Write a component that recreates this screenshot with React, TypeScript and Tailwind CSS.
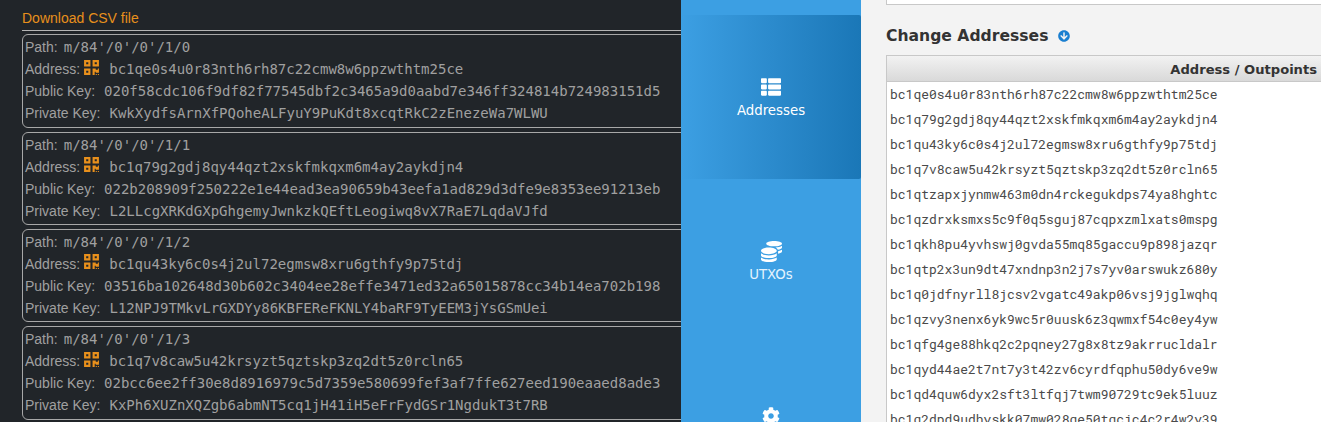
import React from "react";
import { FaThList, FaCoins, FaCog, FaArrowCircleDown, FaQrcode } from "react-icons/fa";

const keys = [
  {
    path: "m/84'/0'/0'/1/0",
    address: "bc1qe0s4u0r83nth6rh87c22cmw8w6ppzwthtm25ce",
    pub: "020f58cdc106f9df82f77545dbf2c3465a9d0aabd7e346ff324814b724983151d5",
    priv: "KwkXydfsArnXfPQoheALFyuY9PuKdt8xcqtRkC2zEnezeWa7WLWU",
  },
  {
    path: "m/84'/0'/0'/1/1",
    address: "bc1q79g2gdj8qy44qzt2xskfmkqxm6m4ay2aykdjn4",
    pub: "022b208909f250222e1e44ead3ea90659b43eefa1ad829d3dfe9e8353ee91213eb",
    priv: "L2LLcgXRKdGXpGhgemyJwnkzkQEftLeogiwq8vX7RaE7LqdaVJfd",
  },
  {
    path: "m/84'/0'/0'/1/2",
    address: "bc1qu43ky6c0s4j2ul72egmsw8xru6gthfy9p75tdj",
    pub: "03516ba102648d30b602c3404ee28effe3471ed32a65015878cc34b14ea702b198",
    priv: "L12NPJ9TMkvLrGXDYy86KBFEReFKNLY4baRF9TyEEM3jYsGSmUei",
  },
  {
    path: "m/84'/0'/0'/1/3",
    address: "bc1q7v8caw5u42krsyzt5qztskp3zq2dt5z0rcln65",
    pub: "02bcc6ee2ff30e8d8916979c5d7359e580699fef3af7ffe627eed190eaaed8ade3",
    priv: "KxPh6XUZnXQZgb6abmNT5cq1jH41iH5eFrFydGSr1NgdukT3t7RB",
  },
];

const change = [
  "bc1qe0s4u0r83nth6rh87c22cmw8w6ppzwthtm25ce",
  "bc1q79g2gdj8qy44qzt2xskfmkqxm6m4ay2aykdjn4",
  "bc1qu43ky6c0s4j2ul72egmsw8xru6gthfy9p75tdj",
  "bc1q7v8caw5u42krsyzt5qztskp3zq2dt5z0rcln65",
  "bc1qtzapxjynmw463m0dn4rckegukdps74ya8hghtc",
  "bc1qzdrxksmxs5c9f0q5sguj87cqpxzmlxats0mspg",
  "bc1qkh8pu4yvhswj0gvda55mq85gaccu9p898jazqr",
  "bc1qtp2x3un9dt47xndnp3n2j7s7yv0arswukz680y",
  "bc1q0jdfnyrll8jcsv2vgatc49akp06vsj9jglwqhq",
  "bc1qzvy3nenx6yk9wc5r0uusk6z3qwmxf54c0ey4yw",
  "bc1qfg4ge88hkq2c2pqney27g8x8tz9akrrucldalr",
  "bc1qyd44ae2t7nt7y3t42zv6cyrdfqphu50dy6ve9w",
  "bc1qd4quw6dyx2sft3ltfqj7twm90729tc9ek5luuz",
  "bc1q2dpd9udhyskk07mw028qe50tqcjc4c2r4w2y39",
];

const App: React.FC = () => {
  return (
    <div className="flex h-[422px] w-[1321px] overflow-hidden">
      {/* Left wallet dump */}
      <div className="w-[681px] shrink-0 overflow-hidden bg-[#212529] pl-[22px] font-['Liberation_Sans',sans-serif] text-[14px] text-[#a0a0a0]">
        <div className="pt-[10px] leading-[16px] text-[#e8901c]">Download CSV file</div>
        <div className="mt-[4px] w-[700px] border-t border-[#b5b5b5]"></div>
        <div className="mt-[3.3px] flex w-[700px] flex-col gap-[4px]">
          {keys.map((k) => (
            <div key={k.path} className="h-[93.33px] rounded-md border border-[#a8a8a8] pl-[2px] pt-[1px] leading-[22px]">
              <div className="flex h-[22px] items-center whitespace-nowrap">
                <span>Path:</span>
                <span className="ml-[6px] font-['DejaVu_Sans_Mono',monospace]">{k.path}</span>
              </div>
              <div className="flex h-[22px] items-center whitespace-nowrap">
                <span>Address:</span>
                <FaQrcode className="ml-[3px] mb-[4px] text-[17px] text-[#e8901c]" />
                <span className="ml-[9px] font-['DejaVu_Sans_Mono',monospace]">{k.address}</span>
              </div>
              <div className="flex h-[22px] items-center whitespace-nowrap">
                <span>Public Key:</span>
                <span className="ml-[9px] font-['DejaVu_Sans_Mono',monospace]">{k.pub}</span>
              </div>
              <div className="flex h-[22px] items-center whitespace-nowrap">
                <span>Private Key:</span>
                <span className="ml-[9px] font-['DejaVu_Sans_Mono',monospace]">{k.priv}</span>
              </div>
            </div>
          ))}
        </div>
      </div>

      {/* Sidebar */}
      <div className="flex w-[180px] shrink-0 flex-col items-center overflow-hidden bg-[#3c9fe3] pt-[15px] font-['DejaVu_Sans',sans-serif] text-[13.33px] text-white">
        <div className="flex h-[164px] w-full shrink-0 flex-col items-center rounded-br-[2px] rounded-tr-[2px] bg-gradient-to-r from-[#3c9fe3] to-[#1a77b7] pt-[62px]">
          <FaThList className="text-[20px]" />
          <span className="mt-[4px] leading-[20px]">Addresses</span>
        </div>
        <div className="flex h-[164px] w-full shrink-0 flex-col items-center pt-[62px]">
          <FaCoins className="text-[21px]" />
          <span className="mt-[3px] leading-[20px] text-[#e4f3fd]">UTXOs</span>
        </div>
        <div className="w-full shrink-0 pt-[64px]">
          <FaCog className="mx-auto text-[18px]" />
        </div>
      </div>

      {/* Change addresses */}
      <div className="min-w-0 flex-1 overflow-hidden bg-[#f3f3f3] pl-[25px] font-['DejaVu_Sans',sans-serif]">
        <div className="h-[5px] w-[500px] border-b border-l border-[#c8c8c8] bg-white"></div>
        <div className="mt-[21px] flex h-[20px] items-center gap-[10px] text-[15.6px] font-bold leading-[20px] text-[#333]">
          <span>Change Addresses</span>
          <FaArrowCircleDown className="text-[12px] text-[#1a7fd0]" />
        </div>
        <div className="mt-[9px] w-[500px] border-l border-t border-[#c8c8c8] bg-white">
          <div className="flex h-[26px] items-center justify-end border-b border-[#c8c8c8] bg-gradient-to-b from-[#f2f2f2] to-[#d9d9d9] pr-[69px] pt-[2px] text-[13.1px] font-bold text-[#333]">
            Address / Outpoints
          </div>
          <div>
            {change.map((a) => (
              <div key={a} className="flex h-[25px] items-center pl-[3px] font-['Roboto_Mono','DejaVu_Sans_Mono',monospace] text-[13px] text-[#4a4a4a]">
                {a}
              </div>
            ))}
          </div>
        </div>
      </div>
    </div>
  );
};

export default App;
